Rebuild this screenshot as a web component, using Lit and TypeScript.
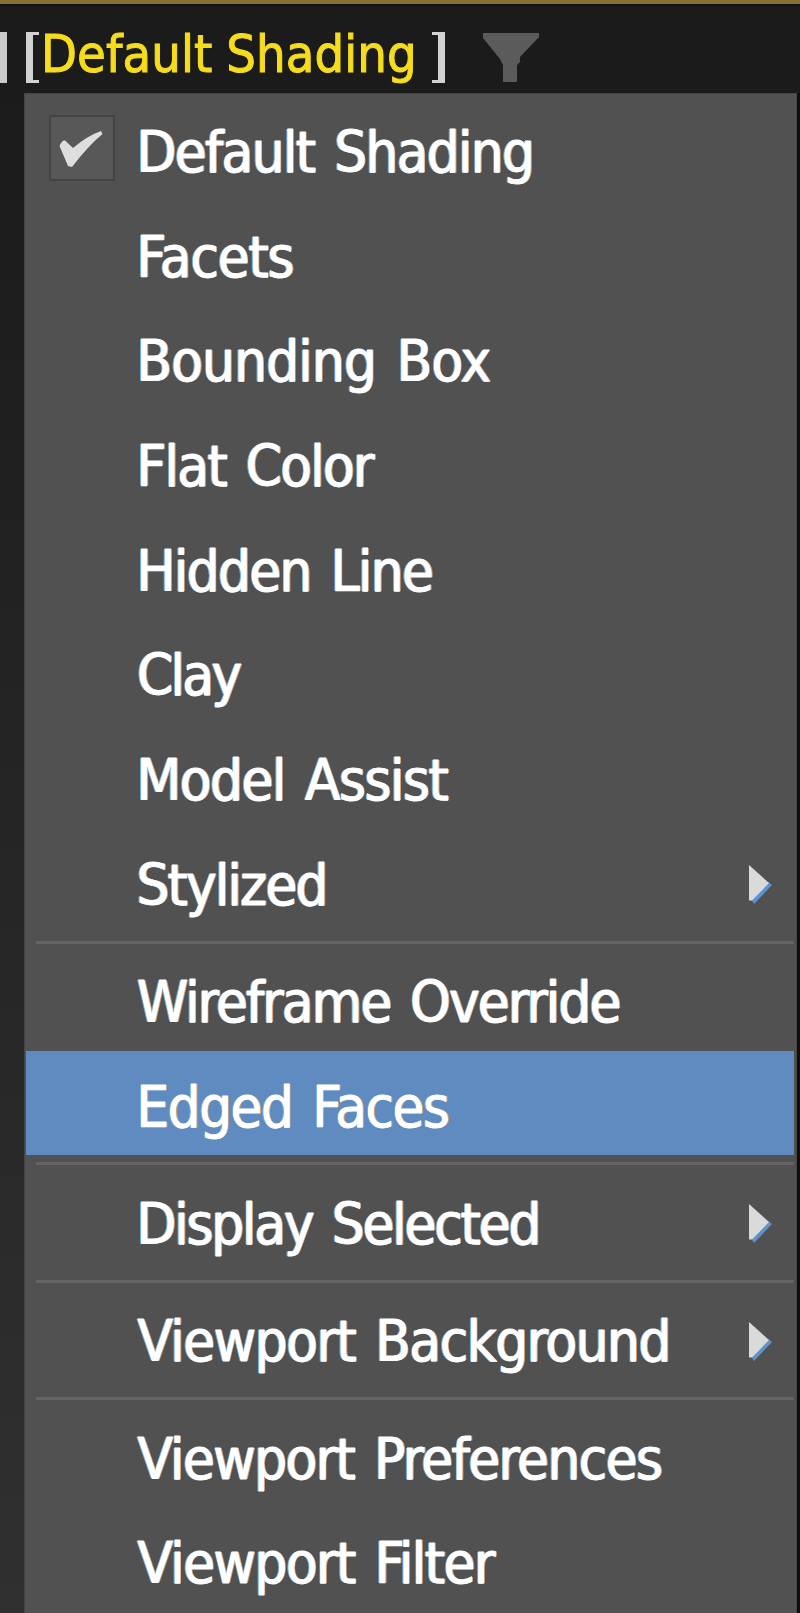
import { LitElement, html, css, nothing } from "lit";
import { customElement } from "lit/decorators.js";
import { styleMap } from "lit/directives/style-map.js";

interface Entry {
  label: string;
  /** Left and right ink edges of the label, in page pixels. */
  from: number;
  to: number;
  checked?: boolean;
  submenu?: boolean;
  active?: boolean;
}

const FAMILY = '"DejaVu Sans Condensed", "DejaVu Sans", sans-serif';

const GROUPS: Entry[][] = [
  [
    { label: "Default Shading", from: 141.5, to: 531, checked: true },
    { label: "Facets", from: 141.5, to: 292.5 },
    { label: "Bounding Box", from: 141.5, to: 489.5 },
    { label: "Flat Color", from: 141.5, to: 375 },
    { label: "Hidden Line", from: 141.5, to: 432 },
    { label: "Clay", from: 139, to: 241.5 },
    { label: "Model Assist", from: 141.5, to: 448.5 },
    { label: "Stylized", from: 139.5, to: 324.5, submenu: true },
  ],
  [
    { label: "Wireframe Override", from: 138, to: 619.5 },
    { label: "Edged Faces", from: 141.5, to: 448, active: true },
  ],
  [{ label: "Display Selected", from: 141.5, to: 537.5, submenu: true }],
  [{ label: "Viewport Background", from: 137.5, to: 667.5, submenu: true }],
  [
    { label: "Viewport Preferences", from: 137.5, to: 661 },
    { label: "Viewport Filter", from: 137.5, to: 496 },
  ],
];

const ctx = document.createElement("canvas").getContext("2d")!;

/** Tracking and indent that make a label's ink span exactly from..to. */
function fit(label: string, from: number, to: number, origin: number, size: number, word: number) {
  ctx.font = `${size}px ${FAMILY}`;
  const m = ctx.measureText(label);
  const ink = m.actualBoundingBoxLeft + m.actualBoundingBoxRight;
  const spaces = label.split(" ").length - 1;
  const tracking = (to - from - ink - spaces * word) / (label.length - 1);
  return {
    letterSpacing: `${tracking.toFixed(3)}px`,
    wordSpacing: `${word}px`,
    marginLeft: `${(from - origin + m.actualBoundingBoxLeft).toFixed(2)}px`,
  };
}

@customElement("app-root")
export class AppRoot extends LitElement {
  static styles = css`
    :host {
      display: flex;
      flex-direction: column;
      box-sizing: border-box;
      height: 1613px;
      overflow: hidden;
      border-top: 4px solid #86712f;
      background: linear-gradient(#1a1a1a, #1c1c1c 10%, #303030);
      font-family: "DejaVu Sans Condensed", "DejaVu Sans", sans-serif;
    }
    .bar {
      display: flex;
      align-items: flex-start;
      height: 89px;
      flex: none;
      background: #1b1b1b;
      box-shadow: inset 0 2px 1px #111;
    }
    .edge {
      width: 7px;
      height: 51px;
      margin-top: 28px;
      background: #cbcbcb;
    }
    .bracket {
      width: 14px;
      height: 51px;
      margin-top: 28px;
      fill: #d2d2d2;
    }
    .open {
      margin-left: 19px;
    }
    .title {
      width: 391px;
      height: 78px;
      line-height: 78px;
      margin-top: 11px;
      color: #f5dc1c;
      font-size: 52px;
      -webkit-text-stroke: 1px #f5dc1c;
    }
    .title span,
    .label {
      display: inline-block;
      white-space: nowrap;
    }
    .funnel {
      width: 58px;
      height: 52px;
      margin: 28px 0 0 37px;
      fill: #5b5b5b;
    }
    .body {
      display: flex;
      flex: 1;
      min-height: 0;
    }
    .menu {
      box-sizing: border-box;
      width: 773px;
      margin-left: 24px;
      padding: 2px 2px 0 1px;
      border: 1px solid #454545;
      border-bottom: 0;
      background: #515151;
    }
    .shade {
      flex: 1;
      background: #0f0f0f;
    }
    .rule {
      height: 12.6px;
      box-sizing: border-box;
      padding: 7px 0 0 10px;
    }
    .rule::before {
      content: "";
      display: block;
      height: 3px;
      background: #646464;
    }
    .row {
      display: flex;
      align-items: center;
      height: 104.7px;
      color: #fff;
      font-size: 57.6px;
    }
    .active {
      background: #5f8bc1;
    }
    .mark {
      flex: none;
      width: 104px;
    }
    .box {
      box-sizing: border-box;
      display: block;
      width: 66px;
      height: 66px;
      margin-left: 23px;
      border: 2px solid #444;
      background: #585858;
      fill: #dedede;
    }
    .text {
      flex: 1;
      height: 104.7px;
      padding-top: 9px;
      box-sizing: border-box;
      line-height: 96px;
    }
    .label {
      -webkit-text-stroke: 0.8px #fff;
      text-shadow: -1.4px 0 0.6px #6fb2ee, 1.4px 0 0.6px #d9a477;
    }
    .arrow {
      flex: none;
      width: 26px;
      height: 42px;
      margin: 6px 20px 0 0;
    }
  `;

  private row(e: Entry) {
    return html`<div class="row ${e.active ? "active" : ""}">
      <div class="mark">
        ${e.checked
          ? html`<svg class="box" viewBox="0 0 62 62">
              <path d="M8.500 29 Q11 23 14 23.500 L22 31 Q36 19 50 14 L51.500 17 Q37 29 21 50 L17 49 Z" />
            </svg>`
          : nothing}
      </div>
      <div class="text"><span class="label" style=${styleMap(fit(e.label, e.from, e.to, 130, 57.6, 5))}>${e.label}</span></div>
      ${e.submenu
        ? html`<svg class="arrow" viewBox="0 0 26 42">
            <path d="M3.500 37 L20 19 L24 22 L6 41 Z" fill="#5d93cf" />
            <path d="M1 2 L21 20 L4 37.500 H1 Z" fill="#dadada" />
          </svg>`
        : nothing}
    </div>`;
  }

  render() {
    return html`
      <div class="bar">
        <div class="edge"></div>
        <svg class="bracket open" viewBox="0 0 14 51"><path d="M0 0H13V3H7V48H13V51H0Z" /></svg>
        <div class="title"><span style=${styleMap(fit("Default Shading", 45, 413, 40, 52, -1))}>Default Shading</span></div>
        <svg class="bracket" viewBox="0 0 14 51"><path d="M1 0H14V51H1V48H7V3H1Z" /></svg>
        <svg class="funnel" viewBox="0 0 58 52"><path d="M1 1H57V5L38 25V30L35 33V50H21V33L18 27L1 6Z" /></svg>
      </div>
      <div class="body">
        <div class="menu">
          ${GROUPS.map(
            (g, i) => html`${i ? html`<div class="rule"></div>` : nothing}${g.map((e) => this.row(e))}`
          )}
        </div>
        <div class="shade"></div>
      </div>
    `;
  }
}
